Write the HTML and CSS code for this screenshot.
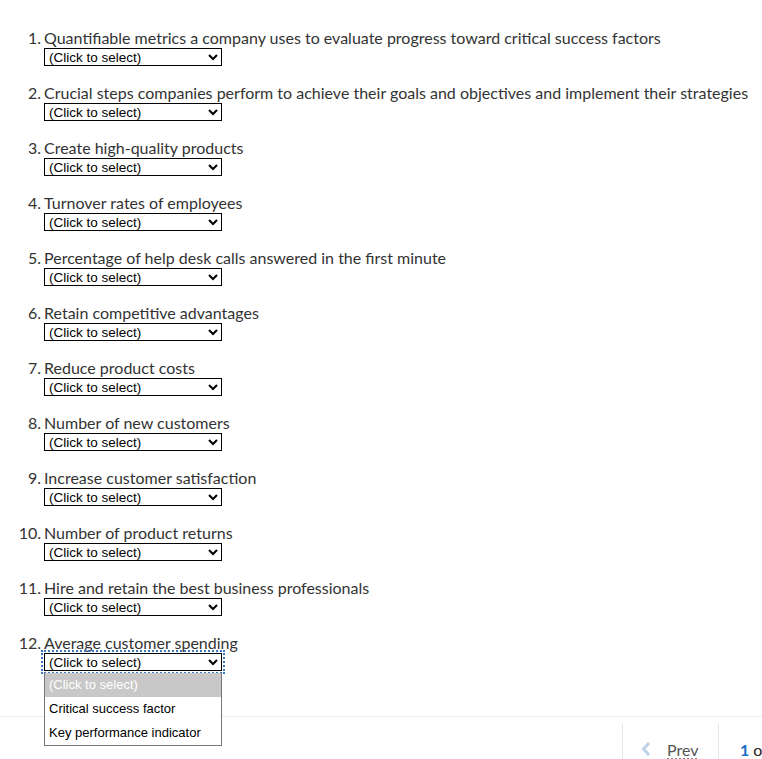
FILE: index.html
```html
<!DOCTYPE html>
<html>
<head>
<meta charset="utf-8">
<link rel="stylesheet" href="styles.css">
</head>
<body>
<div class="page">
  <ol class="questions">
    <li class="q"><span class="num">1.</span><div class="body"><div class="label">Quantifiable metrics a company uses to evaluate progress toward critical success factors</div><div class="sel-wrap"><select class="sel"><option>(Click to select)</option><option>Critical success factor</option><option>Key performance indicator</option></select></div></div></li>
    <li class="q"><span class="num">2.</span><div class="body"><div class="label">Crucial steps companies perform to achieve their goals and objectives and implement their strategies</div><div class="sel-wrap"><select class="sel"><option>(Click to select)</option><option>Critical success factor</option><option>Key performance indicator</option></select></div></div></li>
    <li class="q"><span class="num">3.</span><div class="body"><div class="label">Create high-quality products</div><div class="sel-wrap"><select class="sel"><option>(Click to select)</option><option>Critical success factor</option><option>Key performance indicator</option></select></div></div></li>
    <li class="q"><span class="num">4.</span><div class="body"><div class="label">Turnover rates of employees</div><div class="sel-wrap"><select class="sel"><option>(Click to select)</option><option>Critical success factor</option><option>Key performance indicator</option></select></div></div></li>
    <li class="q"><span class="num">5.</span><div class="body"><div class="label">Percentage of help desk calls answered in the first minute</div><div class="sel-wrap"><select class="sel"><option>(Click to select)</option><option>Critical success factor</option><option>Key performance indicator</option></select></div></div></li>
    <li class="q"><span class="num">6.</span><div class="body"><div class="label">Retain competitive advantages</div><div class="sel-wrap"><select class="sel"><option>(Click to select)</option><option>Critical success factor</option><option>Key performance indicator</option></select></div></div></li>
    <li class="q"><span class="num">7.</span><div class="body"><div class="label">Reduce product costs</div><div class="sel-wrap"><select class="sel"><option>(Click to select)</option><option>Critical success factor</option><option>Key performance indicator</option></select></div></div></li>
    <li class="q"><span class="num">8.</span><div class="body"><div class="label">Number of new customers</div><div class="sel-wrap"><select class="sel"><option>(Click to select)</option><option>Critical success factor</option><option>Key performance indicator</option></select></div></div></li>
    <li class="q"><span class="num">9.</span><div class="body"><div class="label">Increase customer satisfaction</div><div class="sel-wrap"><select class="sel"><option>(Click to select)</option><option>Critical success factor</option><option>Key performance indicator</option></select></div></div></li>
    <li class="q"><span class="num">10.</span><div class="body"><div class="label">Number of product returns</div><div class="sel-wrap"><select class="sel"><option>(Click to select)</option><option>Critical success factor</option><option>Key performance indicator</option></select></div></div></li>
    <li class="q"><span class="num">11.</span><div class="body"><div class="label">Hire and retain the best business professionals</div><div class="sel-wrap"><select class="sel"><option>(Click to select)</option><option>Critical success factor</option><option>Key performance indicator</option></select></div></div></li>
    <li class="q"><span class="num">12.</span><div class="body"><div class="label">Average customer spending</div><div class="sel-wrap focused"><select class="sel"><option>(Click to select)</option><option>Critical success factor</option><option>Key performance indicator</option></select>
      <div class="menu">
        <div class="opt opt-hl">(Click to select)</div>
        <div class="opt">Critical success factor</div>
        <div class="opt">Key performance indicator</div>
      </div></div></div></li>
  </ol>
  <div class="footer">
    <div class="pager-cell prev-cell">
      <svg class="chev" width="10" height="16" viewBox="0 0 10 16"><path d="M8 2 L2.5 8 L8 14" fill="none" stroke="#bdd3ea" stroke-width="3"/></svg>
      <span class="prev">Prev</span>
    </div>
    <div class="pager-cell page-cell"><span class="cur">1</span> <span class="of">o</span></div>
  </div>
</div>
</body>
</html>
```
FILE: styles.css
```css
html, body { margin: 0; padding: 0; background: #fff; }
.page { width: 762px; height: 759px; overflow: hidden; font-family: "Lato", "Open Sans", sans-serif; color: #333; }
.questions { list-style: none; margin: 0; padding: 28px 0 0 0; }
.q { display: flex; margin-bottom: 17px; }
.num { width: 41px; text-align: right; padding-right: 3px; font-size: 16px; line-height: 20px; flex: none; }
.body { display: flex; flex-direction: column; align-items: flex-start; }
.label { font-size: 16px; line-height: 20px; white-space: nowrap; }
.sel-wrap { position: relative; height: 18px; }
.sel { width: 178px; height: 18px; margin: 0; padding: 0; border: 1px solid #000; border-radius: 0; background: #fff; color: #000; font-family: "Liberation Sans", Arial, sans-serif; font-size: 13.5px; display: block; box-sizing: border-box; }
.focused { outline: 2px dotted #3a78c2; outline-offset: 1px; }
.menu { position: absolute; left: 0; top: 20px; width: 178px; box-sizing: border-box; border: 1px solid #767676; border-top: none; background: #fff; z-index: 5; font-family: "Liberation Sans", Arial, sans-serif; font-size: 13px; color: #000; }
.opt { height: 24px; line-height: 24px; padding-left: 4px; }
.opt-hl { background: #c8c8c8; color: #fff; }
.footer { margin-top: 45px; border-top: 1px solid #ececec; height: 60px; display: flex; justify-content: flex-end; padding-top: 7px; box-sizing: border-box; }
.pager-cell { border-left: 1px solid #e6e6e6; display: flex; align-items: center; height: 48px; box-sizing: border-box; padding-top: 2px; }
.prev-cell { width: 96px; padding-left: 18px; gap: 16px; }
.prev { color: #555; font-size: 16px; text-decoration: underline dotted #666; text-underline-offset: 3px; }
.page-cell { width: 44px; padding-left: 21px; font-size: 16px; white-space: nowrap; overflow: hidden; }
.cur { color: #1a6dc4; font-weight: bold; margin-right: 4px; }
.of { color: #222; }
```
